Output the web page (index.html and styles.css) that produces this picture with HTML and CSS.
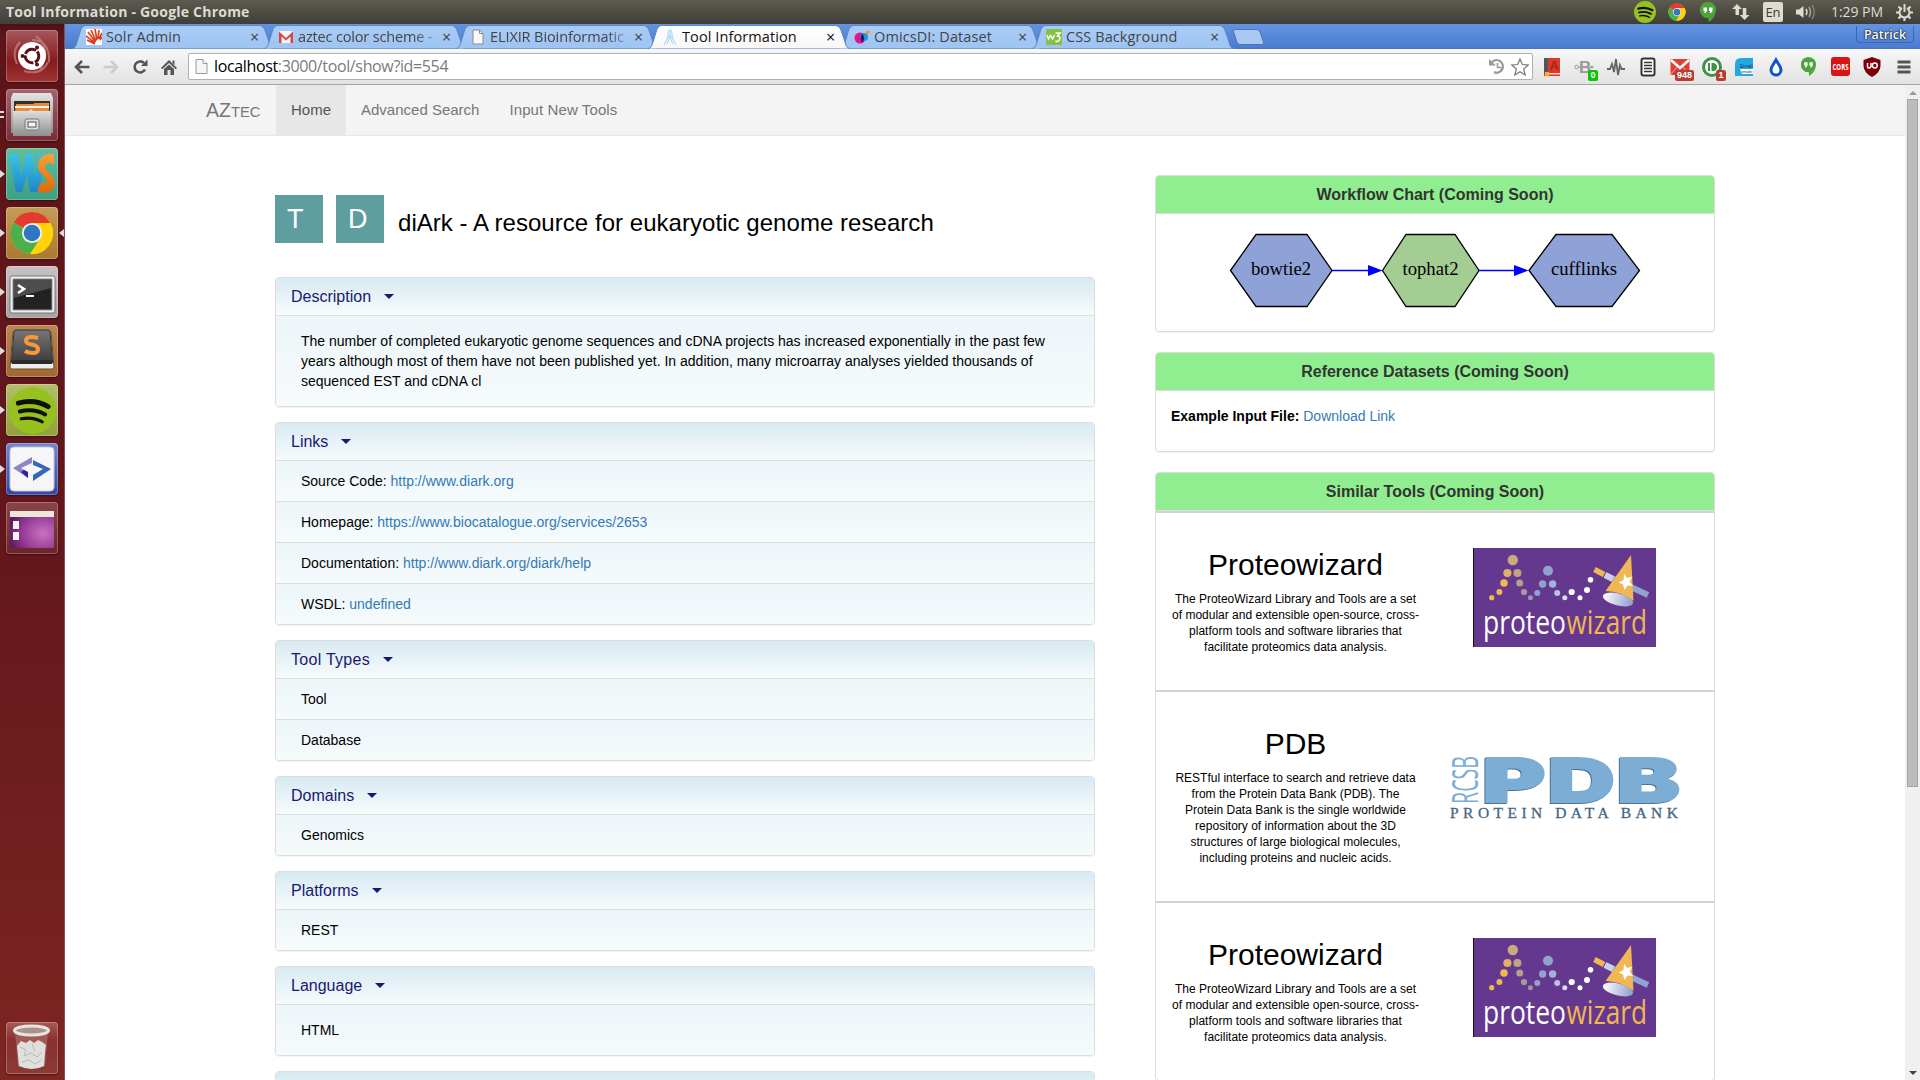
FILE: index.html
```html
<!DOCTYPE html>
<html lang="en">
<head>
<meta charset="utf-8">
<title>Tool Information</title>
<link rel="stylesheet" href="styles.css">
</head>
<body>
<svg class="defs" width="0" height="0" aria-hidden="true">
  <defs>
    <linearGradient id="tabFill" x1="0" y1="0" x2="0" y2="1"><stop offset="0" stop-color="#a9cbf8"/><stop offset="1" stop-color="#9fc4f2"/></linearGradient>
    <linearGradient id="tabActive" x1="0" y1="0" x2="0" y2="1"><stop offset="0" stop-color="#ffffff"/><stop offset="1" stop-color="#f7f7f7"/></linearGradient>
    <linearGradient id="cup" x1="0" x2="1"><stop offset="0" stop-color="#fff"/><stop offset="1" stop-color="#8d9dcb"/></linearGradient>
    <linearGradient id="metal" x1="0" y1="0" x2="0" y2="1"><stop offset="0" stop-color="#e4e4e2"/><stop offset="1" stop-color="#8e8e8c"/></linearGradient>
    <linearGradient id="wsBlue" x1="0" y1="0" x2="0" y2="1"><stop offset="0" stop-color="#3cc4e6"/><stop offset="1" stop-color="#1e86c8"/></linearGradient>
    <linearGradient id="wsOrange" x1="0" y1="0" x2="0" y2="1"><stop offset="0" stop-color="#fba035"/><stop offset="1" stop-color="#dd6a0c"/></linearGradient>
    <linearGradient id="key" x1="0" y1="0" x2="0" y2="1"><stop offset="0" stop-color="#777"/><stop offset="1" stop-color="#3a3a3a"/></linearGradient>
    <radialGradient id="desk" cx=".75" cy=".6" r=".8"><stop offset="0" stop-color="#c873c0"/><stop offset=".6" stop-color="#963a98"/><stop offset="1" stop-color="#5c1a63"/></radialGradient>
    <symbol id="tabShape" viewBox="0 0 202 24"><path d="M0 23.5C4 23 4 20 6 14L9 4Q10.500 1 13 .5H188Q191 1 192.500 4L196 14C198 20 198 23 202 23.500" fill="inherit" stroke="#5f86bd"/></symbol>
    <symbol id="chrome" viewBox="0 0 48 48">
      <circle cx="24" cy="24" r="23" fill="#ffd503"/>
      <path d="M24 24 4 12.500A23 23 0 0 1 44 13H24Z" fill="#e33b2e"/>
      <path d="M24 24 4 12.500A23 23 0 0 0 22 47L33 30Z" fill="#4bb04b"/>
      <path d="M24 13H44A23 23 0 0 1 22 47L33 30Z" fill="#ffd20a"/>
      <circle cx="24" cy="24" r="11" fill="#f2f2ee"/><circle cx="24" cy="24" r="9" fill="#2f77c2"/>
    </symbol>
    <symbol id="spotify" viewBox="0 0 48 48">
      <circle cx="24" cy="24" r="24" fill="#96c11f"/>
      <g fill="none" stroke="#101005" stroke-linecap="round"><path d="M9.500 16.500Q26 12 40 20" stroke-width="5"/><path d="M11 25Q25 21.500 37 28" stroke-width="4"/><path d="M12.500 32.500Q24 30 34 35.500" stroke-width="3.200"/></g>
    </symbol>
    <symbol id="hangouts" viewBox="0 0 16 20">
      <path d="M8 0A8 8 0 0 1 8.500 16V20C14 17 16 12 16 8A8 8 0 1 0 8 16Z" fill="#4da43c"/><circle cx="8" cy="8" r="8" fill="#4da43c"/>
      <path d="M3.500 5.500H7V9L5.500 11H4.200L5 9H3.500ZM9 5.500H12.500V9L11 11H9.700L10.500 9H9Z" fill="#fff"/>
    </symbol>
    <symbol id="proteowizard" viewBox="0 0 183 99">
      <rect width="183" height="99" fill="#65388f"/><rect width="1" height="99" fill="#111"/>
      <g fill="#f0b752"><circle cx="18.700" cy="49.700" r="2.600"/><circle cx="26.400" cy="44" r="3"/><circle cx="31" cy="35" r="3.800"/></g>
      <circle cx="34.400" cy="25" r="4.100" fill="#dfb066"/><circle cx="39.800" cy="12" r="5.200" fill="#c9ab7c"/><circle cx="44.400" cy="25" r="4" fill="#bfa585"/><circle cx="46.700" cy="35" r="3.500" fill="#b5a18c"/>
      <circle cx="51" cy="44" r="3.100" fill="#a79a9b"/><circle cx="57.400" cy="49.700" r="2.500" fill="#9797ab"/>
      <g fill="#90a3cc"><circle cx="64.300" cy="45" r="3"/><circle cx="69.600" cy="36" r="3.700"/><circle cx="75" cy="22.700" r="5"/></g>
      <circle cx="79.600" cy="36" r="3.700" fill="#a3b2d8"/><circle cx="84.200" cy="45" r="3" fill="#b7c2e2"/><circle cx="91.800" cy="49.700" r="2.500" fill="#d9def0"/>
      <g fill="#fff"><circle cx="98.700" cy="44" r="3.100"/><circle cx="107" cy="49.700" r="2.500"/><circle cx="114" cy="42" r="3"/><circle cx="117.500" cy="31.700" r="2.800"/></g>
      <path d="M121.500 21.500 131 26.500" stroke="#f0b752" stroke-width="5.500"/><path d="M132 27 175 47" stroke="#90a3cc" stroke-width="6"/><path d="M132 27 140 31" stroke="#c8d2ea" stroke-width="6"/>
      <path d="M158 7 132.500 43Q147 43 160.500 53Z" fill="#f0b752"/>
      <ellipse cx="145" cy="51.500" rx="15.500" ry="6" transform="rotate(14 145 51.500)" fill="url(#cup)"/>
      <path d="M151 25.500 154 30 159.500 28.500 156.500 33.500 160 38 154.500 37.500 151.500 42 150 36.500 145.500 34.500 150.500 32Z" fill="#fff"/>
      <text x="10" y="86" class="pw-text" fill="#fff" textLength="83" lengthAdjust="spacingAndGlyphs">proteo</text>
      <text x="93.500" y="86" class="pw-text" fill="#f0b752" textLength="80.500" lengthAdjust="spacingAndGlyphs">wizard</text>
    </symbol>
  </defs>
</svg>

<header class="panel-bar">
  <span class="window-title">Tool Information - Google Chrome</span>
  <div class="indicators">
    <svg class="ind-spotify" width="22" height="22"><use href="#spotify"/></svg>
    <svg class="ind-chrome" width="18" height="18"><use href="#chrome"/></svg>
    <svg class="ind-hang" width="16" height="20"><use href="#hangouts"/></svg>
    <svg class="ind-net" width="18" height="16" viewBox="0 0 18 16" fill="#dfdbd2"><path d="M5 0 10 5H7V11H3.500V5H0ZM12.500 16 7.800 11H10.800V4H14.300V11H17.500Z"/></svg>
    <span class="ind-lang">En</span>
    <svg class="ind-vol" width="20" height="16" viewBox="0 0 20 16" fill="none" stroke="#dfdbd2"><path d="M0 5.500H3L7.500 2V14L3 10.500H0Z" fill="#dfdbd2" stroke="none"/><path d="M10 5Q12 8 10 11" stroke-width="1.500"/><path d="M13 3Q16 8 13 13" stroke="#a9a69f" stroke-width="1.500"/><path d="M16 1Q20.500 8 16 15" stroke="#807e77" stroke-width="1.500"/></svg>
    <span class="clock">1:29 PM</span>
    <svg class="ind-gear" width="17" height="17" viewBox="0 0 17 17" fill="none" stroke="#dfdbd2"><path d="M6 4.200A5 5 0 1 0 11 4.200" stroke-width="2"/><path d="M8.500 0V8" stroke-width="2"/><path d="M2.500 2.500 4.500 4.500M14.500 2.500 12.500 4.500M0 8.500H3M14 8.500H17M2.500 14.500 4.500 12.500M14.500 14.500 12.500 12.500M8.500 14V17" stroke-width="2.200"/></svg>
  </div>
</header>

<div class="desktop">
  <aside class="launcher">
    <div class="tile tile-dash"><svg width="52" height="52" viewBox="0 0 52 52"><g fill="none" stroke="#d9a09d" stroke-opacity=".55" stroke-width="2"><path d="M26 10Q44 10 43 32M42 32Q36 46 18 41M11 34Q5 22 14 12M30 6Q46 18 34 40"/></g><circle cx="26" cy="26" r="14" fill="#fff"/><circle cx="26" cy="26" r="6.800" fill="none" stroke="#5b1216" stroke-width="3" stroke-dasharray="12.700 1.500" stroke-dashoffset="5"/><circle cx="16.500" cy="26" r="2" fill="#5b1216"/><circle cx="31" cy="17.500" r="2" fill="#5b1216"/><circle cx="31" cy="34.500" r="2" fill="#5b1216"/></svg></div>
    <div class="tile tile-files"><svg width="52" height="52" viewBox="0 0 52 52"><path d="M7 4H45L47 9V44H5V9Z" fill="url(#metal)"/><rect x="8" y="12" width="36" height="12" fill="#33302c"/><path d="M10 15H27L29 14H43V22H9Z" fill="#e88a3c"/><path d="M9 17H43V19H9Z" fill="#fdf3e0"/><path d="M7 22H23L25 20 27 22H45V47H7Z" fill="url(#metal)"/><rect x="19" y="30" width="14" height="11" rx="2" fill="#dcdcdc" stroke="#777"/><rect x="22" y="33" width="8" height="5" fill="#f5f5f5" stroke="#555"/></svg><i class="pip left double"></i></div>
    <div class="tile tile-ws"><svg width="52" height="52" viewBox="0 0 52 52"><path d="M3 6H12L15 28 20 6H27L29 28 33 6H39L33 44H24L21 27 16 44H10Z" fill="url(#wsBlue)"/><path d="M48 6V16Q39 13 39 19C39 24 49 26 49 35S39 47 31 43L35 34Q41 37 41 33C41 28 31 26 32 17S40 5 48 6Z" fill="url(#wsOrange)"/></svg><i class="pip left"></i></div>
    <div class="tile tile-chrome"><svg width="44" height="44"><use href="#chrome"/></svg><i class="pip left"></i><i class="pip right"></i></div>
    <div class="tile tile-term"><svg width="52" height="52" viewBox="0 0 52 52"><rect x="4" y="10" width="45" height="37" rx="2" fill="#eee" stroke="#777"/><rect x="7" y="13" width="39" height="31" fill="#222" stroke="#999"/><path d="M8 14H45V22L8 32Z" fill="#4d4d4d"/><path d="M12 19 18 23 12 27" fill="none" stroke="#fff" stroke-width="2.600"/><path d="M20 30H28" stroke="#fff" stroke-width="2"/></svg><i class="pip left"></i></div>
    <div class="tile tile-sublime"><svg width="52" height="52" viewBox="0 0 52 52"><path d="M7 7H45L48 42Q48 44 46 44H6Q4 44 4 42Z" fill="#eee" stroke="#6e4a25"/><path d="M10 5H42Q44 5 44 7L46.500 35V38H5.500V35L8 7Q8 5 10 5Z" fill="url(#key)" stroke="#333"/><path d="M6 35H46V39H6Z" fill="#2c2c2c"/><path d="M32 13Q20 10 20 16C20 21 32 18 32 24S22 28 19 26" fill="none" stroke="#f9983a" stroke-width="4"/></svg><i class="pip left"></i></div>
    <div class="tile tile-spotify"><svg width="47" height="47"><use href="#spotify"/></svg><i class="pip left"></i></div>
    <div class="tile tile-code"><svg width="52" height="52" viewBox="0 0 52 52"><rect x="4" y="4" width="44" height="44" rx="4" fill="#f6f6f8" stroke="#c8c8d0"/><path d="M26 14 7 25 22 35V29L15 25 26 20Z" fill="#8d84c0"/><path d="M15 29 18 27 22 29V35Z" fill="#3420a0"/><path d="M27 17 45 26 27 38V32L37 26 27 22Z" fill="#3467b5"/></svg><i class="pip left"></i></div>
    <div class="tile tile-show"><svg width="52" height="52" viewBox="0 0 52 52"><rect x="4" y="9" width="44" height="37" rx="1" fill="url(#desk)"/><rect x="4" y="9" width="44" height="6" fill="#ebe8d9"/><rect x="7" y="19" width="6" height="8" fill="#f6f4f2"/><rect x="7" y="30" width="6" height="8" fill="#f6f4f2"/></svg></div>
    <div class="tile tile-trash"><svg width="52" height="52" viewBox="0 0 52 52"><path d="M9 10 12 44Q26 50 39 44L42 10Z" fill="#cda6a2" fill-opacity=".35"/><path d="M11 24 15 19 20 21 24 18 28 21 32 18 36 20 40 23 39 30 38 44Q26 50 13 44L12 34Z" fill="#dfdfdb"/><path d="M14 25 20 28 18 34 25 31 31 35 36 30M16 40 23 38 29 42 35 38M26 22 29 29" stroke="#bbbab5" fill="none"/><ellipse cx="25.500" cy="8.500" rx="17" ry="4.500" fill="#a79490" stroke="#e6e5e1" stroke-width="3"/></svg></div>
  </aside>

  <main class="browser">
    <div class="tabs">
      <div class="tab"><svg class="shape"><use href="#tabShape"/></svg>
        <svg class="fav" viewBox="0 0 16 16"><rect width="16" height="16" fill="#fff"/><g stroke="#d9411e" stroke-width="1.700"><path d="M9 15 1 11M9 14 0 7M9.500 13 2 3M10 12 5 1M11 11 9 0M12 10 13 1M13 10 16 4M14 11 16 8"/></g></svg>
        <span class="tab-text">Solr Admin</span><span class="close">×</span></div>
      <div class="tab"><svg class="shape"><use href="#tabShape"/></svg>
        <svg class="fav" viewBox="0 0 16 16"><rect x="1" y="2" width="14" height="12" rx="1" fill="#f4f4f4"/><path d="M1 14V2.500L8 9 15 2.500V14H12.500V7.500L8 11.500 3.500 7.500V14Z" fill="#d5473c"/></svg>
        <span class="tab-text tight">aztec color scheme -</span><span class="close">×</span></div>
      <div class="tab"><svg class="shape"><use href="#tabShape"/></svg>
        <svg class="fav" viewBox="0 0 16 16"><path d="M3 1H9.500L13 4.500V15H3Z" fill="#fafafa" stroke="#8a8a8a"/><path d="M9.500 1V4.500H13" fill="none" stroke="#8a8a8a"/></svg>
        <span class="tab-text fade">ELIXIR Bioinformatic</span><span class="close">×</span></div>
      <div class="tab active"><svg class="shape"><use href="#tabShape"/></svg>
        <svg class="fav" viewBox="0 0 16 16" fill="none" stroke="#8fd3f0"><path d="M8 0V8M6.500 1 5.500 9 2 16M9.500 1 10.500 9 14 16M5 10 8 6 11 10M8 8 5 15M8 8 11 15" stroke-width=".9"/></svg>
        <span class="tab-text">Tool Information</span><span class="close">×</span></div>
      <div class="tab"><svg class="shape"><use href="#tabShape"/></svg>
        <svg class="fav" viewBox="0 0 16 16"><circle cx="6" cy="9" r="5.500" fill="#e5128b"/><circle cx="10" cy="8" r="4" fill="#1897e0"/><path d="M8 4.500Q12 8 8.500 13.500Q5 10 8 4.500Z" fill="#221a6b"/><circle cx="13.500" cy="3.500" r="2" fill="#f59a23"/></svg>
        <span class="tab-text">OmicsDI: Dataset</span><span class="close">×</span></div>
      <div class="tab"><svg class="shape"><use href="#tabShape"/></svg>
        <svg class="fav" viewBox="0 0 16 16"><rect width="16" height="16" rx="1" fill="#84c341"/><path d="M1 6 2.500 10 4.500 6.500 6.500 10 8.500 6M9.500 4H14L11.500 7Q15 7.500 13.500 10.500T9.500 12" fill="none" stroke="#fff" stroke-width="1.500"/></svg>
        <span class="tab-text">CSS Background</span><span class="close">×</span></div>
      <svg class="newtab" width="33" height="16" viewBox="0 0 33 16"><path d="M3 .5H25Q27 .5 28 3L31.500 13Q32 15.500 30 15.500H8Q6 15.500 5 13L1.500 3Q1 .5 3 .5Z" fill="#a9c8f3" stroke="#4b75b9"/></svg>
      <span class="profile">Patrick</span>
    </div>

    <div class="toolbar">
      <svg class="nav-btn" width="16" height="14" viewBox="0 0 16 14" fill="none" stroke="#555" stroke-width="2.600"><path d="M15.500 7H2M8 1 2 7 8 13"/></svg>
      <svg class="nav-btn" width="16" height="14" viewBox="0 0 16 14" fill="none" stroke="#ccc" stroke-width="2.600"><path d="M.5 7H14M8 1 14 7 8 13"/></svg>
      <svg class="nav-btn" width="16" height="16" viewBox="0 0 16 16"><path d="M13 10.500A5.500 5.500 0 1 1 12 4" fill="none" stroke="#555" stroke-width="2.600"/><path d="M15.500 .5V7H9Z" fill="#555"/></svg>
      <svg class="nav-btn" width="16" height="16" viewBox="0 0 16 16" fill="#555"><path d="M8 1 16 9 14.700 10.200 8 4 1.300 10.200 0 9ZM11.500 1.500H13.500V6L11.500 4ZM3 10 8 5.500 13 10V16H9.500V11H6.500V16H3Z"/></svg>
      <div class="omnibox">
        <svg width="13" height="15" viewBox="0 0 13 15"><path d="M1 .5H8L12 4.500V14.500H1Z" fill="#f6f6f6" stroke="#999"/><path d="M8 .5V4.500H12" fill="#fff" stroke="#999"/></svg>
        <span class="url"><b>localhost</b>:3000/tool/show?id=554</span>
        <svg class="hist" width="17" height="17" viewBox="0 0 17 17" fill="none" stroke="#999" stroke-width="2.400"><path d="M3 4A6.300 6.300 0 1 1 5 14.200"/><path d="M0 1V7.500H7Z" fill="#999" stroke="none"/><path d="M8.500 5V9.500H12" stroke-width="1.600"/></svg>
        <svg width="18" height="18" viewBox="0 0 18 18"><path d="M9 1 11.300 6.500 17.300 7 12.700 11 14.200 17 9 13.800 3.800 17 5.300 11 .7 7 6.700 6.500Z" fill="#fff" stroke="#777" stroke-width="1.200"/></svg>
      </div>
      <div class="exts">
        <div class="ext"><svg width="18" height="20" viewBox="0 0 18 20"><rect x="1" y="1" width="16" height="18" fill="#d83a2c"/><path d="M1 1H5V16H1Z" fill="#555"/><path d="M5 16H17V17.500H5Z" fill="#f4dcd4"/><path d="M2 15H6V20L4 18.500 2 20Z" fill="#f3b22d"/><text x="6.500" y="13" class="book-a">A</text></svg></div>
        <div class="ext"><svg width="20" height="18" viewBox="0 0 20 18"><text x="5" y="15" class="ext-b">B</text><path d="M4 9H17" stroke="#999"/><circle cx="2.500" cy="9" r="1.800" fill="none" stroke="#999"/><circle cx="18" cy="9" r="1.300" fill="#999"/></svg><span class="badge green">0</span></div>
        <div class="ext"><svg width="20" height="20" viewBox="0 0 20 20"><path d="M1 12H4L6 7 8 15 10 2 12 18 14 8 15.500 12H19" fill="none" stroke="#666" stroke-width="1.800"/></svg></div>
        <div class="ext"><svg width="16" height="20" viewBox="0 0 16 20"><rect x="1.500" y="1.500" width="13" height="17" rx="2" fill="#fff" stroke="#333" stroke-width="2"/><path d="M4 5.500H12M4 8.500H12M4 11.500H12M4 14.500H12" stroke="#333" stroke-width="1.600"/></svg></div>
        <div class="ext"><svg width="20" height="16" viewBox="0 0 20 16"><rect x=".5" width="19" height="16" rx="1" fill="#dd3f35"/><path d="M1 1 10 9 19 1" fill="none" stroke="#fff" stroke-width="2.500"/><path d="M1 15 7 8M19 15 13 8" stroke="#f0a49f"/></svg><span class="badge red">948</span></div>
        <div class="ext"><svg width="20" height="20" viewBox="0 0 20 20"><circle cx="10" cy="10" r="8.500" fill="#fff" stroke="#3f9245" stroke-width="3"/><path d="M6 6H8V14H6ZM9.500 6H12Q15 7 15 10T12 14H9.500Z" fill="#3f9245"/></svg><span class="badge red">1</span></div>
        <div class="ext"><svg width="20" height="20" viewBox="0 0 20 20"><path d="M1 7Q1 1 7 1H19V19H1Z" fill="#26a7e1"/><path d="M6 12H19V17H8Z" fill="#fff"/><text x="6" y="11" class="mini dark">Email</text><text x="7.500" y="16" class="mini" textLength="11">emailer</text></svg></div>
        <div class="ext"><svg width="16" height="20" viewBox="0 0 16 20"><path d="M8 3C5.500 7.500 3 9.500 3 13A5 5 0 0 0 13 13C13 9.500 10.500 7.500 8 3Z" fill="#fff" stroke="#0b55c4" stroke-width="3"/></svg></div>
        <div class="ext"><svg width="15" height="19"><use href="#hangouts"/></svg></div>
        <div class="ext"><svg width="19" height="19" viewBox="0 0 19 19"><rect width="19" height="19" rx="3" fill="#d81414"/><text x="1.500" y="13" class="cors" textLength="16" lengthAdjust="spacingAndGlyphs">CORS</text></svg></div>
        <div class="ext"><svg width="18" height="20" viewBox="0 0 18 20"><path d="M9 0 17.500 3V9Q17 16 9 20Q1 16 .5 9V3Z" fill="#7d0008"/><path d="M4.500 6V9.500Q4.500 11 6 11T8 9.500V6" fill="none" stroke="#fff" stroke-width="1.500"/><circle cx="11.800" cy="8.500" r="2.400" fill="none" stroke="#fff" stroke-width="1.500"/></svg></div>
        <div class="ext"><svg width="14" height="14" viewBox="0 0 14 14" stroke="#555" stroke-width="2.800"><path d="M.5 2H13.500M.5 7H13.500M.5 12H13.500"/></svg></div>
      </div>
    </div>

    <div class="viewport">
      <div class="page">
        <nav class="navbar">
          <a class="brand">AZ<span>TEC</span></a>
          <a class="nav-link current">Home</a>
          <a class="nav-link">Advanced Search</a>
          <a class="nav-link">Input New Tools</a>
        </nav>
        <div class="content">
          <div class="col-main">
            <div class="title-row">
              <span class="type-box">T</span><span class="type-box">D</span>
              <h1>diArk - A resource for eukaryotic genome research</h1>
            </div>
            <section class="card"><h2>Description<i></i></h2>
              <p class="body">The number of completed eukaryotic genome sequences and cDNA projects has increased exponentially in the past few years although most of them have not been published yet. In addition, many microarray analyses yielded thousands of sequenced EST and cDNA cl</p></section>
            <section class="card"><h2>Links<i></i></h2>
              <div class="row">Source Code: <a>http://www.diark.org</a></div>
              <div class="row">Homepage: <a>https://www.biocatalogue.org/services/2653</a></div>
              <div class="row">Documentation: <a>http://www.diark.org/diark/help</a></div>
              <div class="row">WSDL: <a>undefined</a></div></section>
            <section class="card types"><h2>Tool Types<i></i></h2>
              <div class="row">Tool</div><div class="row">Database</div></section>
            <section class="card"><h2>Domains<i></i></h2><div class="row">Genomics</div></section>
            <section class="card"><h2>Platforms<i></i></h2><div class="row">REST</div></section>
            <section class="card"><h2>Language<i></i></h2><p class="body">HTML</p></section>
            <section class="card"><h2></h2></section>
          </div>

          <div class="col-side">
            <section class="side-card"><h3>Workflow Chart (Coming Soon)</h3>
              <svg class="chart" width="420" height="117" viewBox="0 0 420 117">
                <g stroke="#000" stroke-width="1.300"><path d="M5.500 56.500 31 20.500H82L107 56.500 82 92.500H31Z" fill="#8fa2d8"/><path d="M157.500 56.500 181 20.500H230L254 56.500 230 92.500H181Z" fill="#a3cd92"/><path d="M304 56.500 331 20.500H387L414.500 56.500 387 92.500H331Z" fill="#8fa2d8"/></g>
                <path d="M107 56.500H143M254 56.500H290" stroke="#00f" stroke-width="1.300"/><path d="M143 51 157.500 56.500 143 62ZM289 51 303.500 56.500 289 62Z" fill="#00f"/>
                <g class="chart-text"><text x="56" y="61">bowtie2</text><text x="205.500" y="61">tophat2</text><text x="359" y="61">cufflinks</text></g>
              </svg></section>
            <section class="side-card data"><h3>Reference Datasets (Coming Soon)</h3>
              <p><b>Example Input File:</b> <a>Download Link</a></p></section>
            <section class="side-card"><h3>Similar Tools (Coming Soon)</h3>
              <div class="similar"><div class="about"><h4>Proteowizard</h4><p>The ProteoWizard Library and Tools are a set of modular and extensible open-source, cross-platform tools and software libraries that facilitate proteomics data analysis.</p></div>
                <svg class="pw-logo" width="183" height="99"><use href="#proteowizard"/></svg></div>
              <div class="similar"><div class="about"><h4>PDB</h4><p>RESTful interface to search and retrieve data from the Protein Data Bank (PDB). The Protein Data Bank is the single worldwide repository of information about the 3D structures of large biological molecules, including proteins and nucleic acids.</p></div>
                <svg class="pdb-logo" width="232" height="64" viewBox="0 0 232 64">
                  <g class="pdb-shadow"><text x="32.500" y="45" textLength="63" lengthAdjust="spacingAndGlyphs">P</text><text x="98" y="45" textLength="67" lengthAdjust="spacingAndGlyphs">D</text><text x="167" y="45" textLength="63" lengthAdjust="spacingAndGlyphs">B</text></g>
                  <text transform="translate(28 47) rotate(-90)" class="rcsb" textLength="48" lengthAdjust="spacingAndGlyphs">RCSB</text>
                  <text x="0" y="61" class="bank" textLength="228">PROTEIN DATA BANK</text>
                </svg></div>
              <div class="similar"><div class="about"><h4>Proteowizard</h4><p>The ProteoWizard Library and Tools are a set of modular and extensible open-source, cross-platform tools and software libraries that facilitate proteomics data analysis.</p></div>
                <svg class="pw-logo" width="183" height="99"><use href="#proteowizard"/></svg></div>
            </section>
          </div>
        </div>
      </div>
      <div class="scrollbar"><i class="up"></i><div class="thumb"></div><i class="down"></i></div>
    </div>
  </main>
</div>
</body>
</html>
```
FILE: styles.css
```css
* { box-sizing: border-box; }
body { margin: 0; width: 1920px; height: 1080px; overflow: hidden; display: flex; flex-direction: column; font: 14px/20px "Liberation Sans", Arial, sans-serif; color: #000; background: #fff; }
h1, h2, h3, h4, p { margin: 0; font-weight: 400; }
svg { display: block; flex: none; }
.defs { position: absolute; }
a { color: #337ab7; }

/* desktop panel */
.panel-bar { height: 24px; flex: none; display: flex; align-items: center; justify-content: space-between; padding: 0 7px 0 6px; background: linear-gradient(#5e5b50, #3e3d38); color: #dfdbd2; font-family: "Open Sans", "Noto Sans", sans-serif; }
.window-title { font-size: 14px; font-weight: 700; letter-spacing: .22px; }
.indicators { display: flex; align-items: center; height: 24px; }
.ind-chrome { margin-left: 12px; }
.ind-hang { margin-left: 14px; }
.ind-net { margin-left: 16px; }
.ind-lang { margin-left: 13px; width: 20px; height: 20px; line-height: 21px; border-radius: 2px; background: #dfdbd2; color: #3c3b37; font-size: 13px; text-align: center; }
.ind-vol { margin-left: 13px; }
.clock { width: 52px; margin-left: 15px; font-size: 14px; letter-spacing: -.05px; white-space: nowrap; }
.ind-gear { margin-left: 13px; }

/* launcher */
.desktop { flex: 1; display: flex; min-height: 0; }
.launcher { width: 65px; flex: none; display: flex; flex-direction: column; gap: 7px; padding: 6px 0 6px 6px; background: linear-gradient(#4c1015, #5d151a 10px, #63171b 50%, #7e2622); border-right: 1px solid #8c5050; }
.tile { position: relative; width: 52px; height: 52px; border-radius: 4px; display: flex; align-items: center; justify-content: center; box-shadow: inset 0 0 0 1px rgba(255,255,255,.25), 0 1px 2px rgba(0,0,0,.4); }
.tile-dash { background: linear-gradient(#a5575b, #861b1f 60%, #a03434); }
.tile-files { background: linear-gradient(#a4646f, #7c2a38); }
.tile-ws { background: linear-gradient(#63bd9f, #3c9f83); }
.tile-chrome { background: linear-gradient(#c39c58, #a97a2e); }
.tile-term { background: linear-gradient(#c9c2c4, #a79fa1); }
.tile-sublime { background: linear-gradient(#bb8656, #a06831); }
.tile-spotify { background: linear-gradient(#b4bf68, #8fa13c); }
.tile-code { background: linear-gradient(#7587cd, #3346a8); }
.tile-show { background: linear-gradient(#8a4447, #6c2428); }
.tile-trash { margin-top: auto; background: linear-gradient(#a65a58, #8a2f2d 35%, #8b3a37); }
.pip { position: absolute; top: 22px; left: -6px; border: 4px solid transparent; border-left: 5px solid #ddd; border-right: 0; }
.pip.right { left: auto; right: -6px; border-right: 5px solid #ddd; border-left: 0; }
.pip.double { top: 22px; width: 4px; height: 7px; border: solid #ddd; border-width: 2px 0; }

/* tab strip */
.browser { flex: 1; min-width: 0; display: flex; flex-direction: column; }
.tabs { height: 25px; flex: none; display: flex; padding: 1px 6px 0 7px; background: linear-gradient(#6494e0, #4a7bd0); border-bottom: 1px solid #5077b4; font-family: "Open Sans", "Noto Sans", sans-serif; }
.tab { position: relative; width: 202px; height: 24px; margin-right: -10px; flex: none; display: flex; align-items: center; padding: 0 13px 0 14px; fill: url(#tabFill); color: #444; }
.tab.active { z-index: 2; fill: url(#tabActive); color: #111; }
.shape { position: absolute; left: 0; top: 0; width: 202px; height: 24px; }
.fav { position: relative; width: 16px; height: 16px; }
.tab-text { position: relative; width: 138px; height: 20px; margin-left: 4px; font-size: 14.5px; line-height: 20px; letter-spacing: .1px; white-space: nowrap; overflow: hidden; }
.fade, .tight { -webkit-mask-image: linear-gradient(90deg, #000 115px, transparent 148px); mask-image: linear-gradient(90deg, #000 115px, transparent 148px); }
.tight { letter-spacing: -.16px; }
.fade { letter-spacing: -.1px; }
.close { position: relative; width: 13px; margin-left: 4px; font-size: 16px; line-height: 20px; text-align: center; }
.newtab { margin: 4px 0 0 8px; }
.profile { margin: 1px 0 0 auto; width: 58px; height: 17px; text-align: center; border: 1px solid #3e66ac; border-top: 0; border-radius: 0 0 4px 4px; color: #fff; font-size: 12.5px; font-weight: 600; line-height: 17px; text-shadow: 0 0 2px #000, 0 0 1px #000; }

/* toolbar */
.toolbar { height: 36px; flex: none; display: flex; align-items: center; padding: 0 0 0 9px; background: linear-gradient(#f7f7f7, #e2e2e2); border-bottom: 1px solid #a5a5a5; }
.nav-btn { margin-right: 13px; }
.nav-btn:nth-child(4) { margin-right: 11px; }
.omnibox { width: 1345px; height: 27px; flex: none; display: flex; align-items: center; padding: 0 3px 0 6px; border: 1px solid #b0b0b0; border-radius: 2px; background: #fff; }
.url { flex: 1; margin: 0 0 2px 6px; color: #7b7b7b; font: 16px/24px "Open Sans", "Noto Sans", sans-serif; letter-spacing: -.36px; }
.url b { color: #000; font-weight: 400; }
.hist { margin-right: 5px; }
.exts { display: flex; margin-left: 3px; }
.ext { position: relative; width: 32px; height: 24px; display: flex; align-items: center; justify-content: center; }
.badge { position: absolute; right: 2px; top: 15px; padding: 0 2px; min-width: 10px; height: 11px; border-radius: 2px; color: #fff; font-size: 9px; font-weight: 700; line-height: 11px; text-align: center; }
.badge.green { background: #06c306; }
.badge.red { background: #b73c33; }
.book-a { font: 700 13px "Liberation Sans", sans-serif; fill: #a8251b; }
.ext-b { font: 700 17px "Liberation Sans", sans-serif; fill: #999; }
.mini { font: 4px "Liberation Sans", sans-serif; fill: #444; }
.mini.dark { font-size: 5px; fill: #0a3c60; }
.cors { font: 700 8.5px "Open Sans", sans-serif; fill: #fff; }

/* page */
.viewport { flex: 1; min-height: 0; display: flex; }
.page { flex: 1; overflow: hidden; background: #fff; }
.navbar { height: 51px; display: flex; padding-left: 141px; background: #f4f4f4; border-bottom: 1px solid #e7e7e7; line-height: 50px; }
.brand { width: 70px; color: #777; font-size: 19.5px; }
.brand span { font-size: 14.8px; }
.nav-link { padding: 0 15px; color: #777; font-size: 15px; }
.nav-link.current { background: #e7e7e7; color: #555; }
.nav-link:last-child { letter-spacing: .1px; }
.content { display: flex; align-items: flex-start; gap: 60px; padding: 39px 190px 0 210px; }
.col-main { width: 820px; padding-top: 20px; display: flex; flex-direction: column; gap: 15px; }
.title-row { display: flex; height: 67px; gap: 13px; }
.type-box { width: 48px; height: 48px; padding-left: 12px; background: #5f9ea0; color: #fff; font-size: 27px; line-height: 48px; }
h1 { margin-left: 1px; font-size: 24px; line-height: 55px; letter-spacing: .045px; }
.card, .side-card { border: 1px solid #ddd; border-radius: 4px; box-shadow: 0 1px 1px rgba(0,0,0,.05); overflow: hidden; }
.card h2 { height: 37px; display: flex; align-items: center; padding: 0 15px; color: #191970; font-size: 16px; background: linear-gradient(#d7eaf2, #f7fbfc); }
.card h2 i { margin-left: 13px; border: 5px solid transparent; border-top-color: #191970; border-bottom: 0; }
.types h2 { letter-spacing: .28px; }
.row, .body { border-top: 1px solid #ddd; background: linear-gradient(#edf5f9, #f6fbfc); }
.row { height: 41px; padding: 10px 25px; }
.row a { letter-spacing: .02px; }
.body { padding: 15px 25px; }
.col-side { width: 560px; }
.side-card { margin-bottom: 20px; }
.side-card h3 { height: 38px; border-bottom: 1px solid #ddd; background: #90ee90; color: #333; font-size: 16px; font-weight: 700; line-height: 37px; text-align: center; }
.chart { margin: 0 auto; }
.chart-text { font: 18.67px "Liberation Serif", serif; text-anchor: middle; }
.data p { height: 60px; padding: 15px; }
.similar { border-top: 2px solid #d3d3d3; height: 211px; display: flex; }
.similar:nth-of-type(odd) { height: 179px; }
.about { width: 279px; padding: 34px 15px 0; text-align: center; }
.about h4 { font-size: 30px; line-height: 36px; margin-bottom: 8px; }
.about p { font-size: 12px; line-height: 16px; }
.pw-logo { margin: 35px 0 0 38px; }
.pw-text { font: 33px "Open Sans", "Noto Sans", sans-serif; }
.pdb-logo { margin: 65px 0 0 15px; overflow: visible; }
.pdb-shadow { font: 900 60px Inter, "Open Sans", sans-serif; fill: #7badd5; stroke: #7badd5; stroke-width: 2px; filter: drop-shadow(-1px 1px 0 #4a7496); }
.rcsb { font: 37px "Open Sans", sans-serif; fill: #7badd5; }
.bank { font: 15.5px "Liberation Serif", serif; fill: #44657f; stroke: #44657f; stroke-width: .3px; }

/* scrollbar */
.scrollbar { width: 15px; display: flex; flex-direction: column; align-items: center; background: #f0f0f0; }
.scrollbar .up { margin: 6px 0 4px; border: 4px solid transparent; border-bottom-color: #999; border-top: 0; }
.thumb { width: 11px; height: 688px; background: #bcbcbc; border: 1px solid #a5a5a5; }
.scrollbar .down { margin: auto 0 5px; border: 4px solid transparent; border-top-color: #444; border-bottom: 0; }
```
